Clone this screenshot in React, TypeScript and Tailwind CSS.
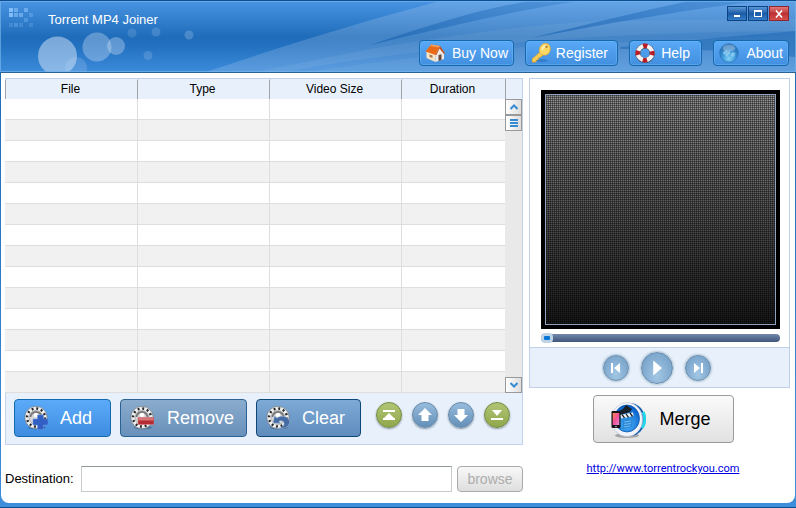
import type { ReactNode } from "react";
import { clsx } from "clsx";

const columns = [
  { name: "File", width: "w-[132px]" },
  { name: "Type", width: "w-[132px]" },
  { name: "Video Size", width: "w-[132px]" },
  { name: "Duration", width: "" },
];

const rows = Array.from({ length: 14 }, (_, i) => i);

function HeaderArt() {
  return (
    <svg
      className="absolute inset-0 h-full w-full"
      viewBox="0 0 796 72"
      preserveAspectRatio="xMaxYMin slice"
      aria-hidden="true"
    >
      <defs>
        <linearGradient id="sky" x1="0" y1="0" x2="0" y2="1">
          <stop offset="0" stopColor="#4894e3" />
          <stop offset="0.5" stopColor="#1f6cba" />
          <stop offset="0.6" stopColor="#216fbf" />
          <stop offset="1" stopColor="#3d8bdb" />
        </linearGradient>
        <linearGradient id="beam" x1="0" y1="0" x2="1" y2="0">
          <stop offset="0" stopColor="#fff" stopOpacity="0.15" />
          <stop offset="1" stopColor="#a9c8ec" stopOpacity="0.26" />
        </linearGradient>
        <linearGradient id="shade" x1="0" y1="0" x2="1" y2="0">
          <stop offset="0" stopColor="#135fae" stopOpacity="0.6" />
          <stop offset="1" stopColor="#2471c0" stopOpacity="0.3" />
        </linearGradient>
      </defs>
      <rect width="796" height="72" fill="url(#sky)" />
      <path d="M203 72C280 46 350 24 440 0H796V72Z" fill="url(#beam)" />
      <path d="M250 72L370 48C430 38 520 24 600 20L796 18V30C600 30 400 48 280 72Z" fill="#fff" fillOpacity="0.06" />
      <path d="M300 72C380 60 450 51 560 44L796 34V72Z" fill="#fff" fillOpacity="0.05" />
      <path d="M370 44C430 24 480 8 530 0H578C510 11 450 25 370 44Z" fill="url(#shade)" />
      <path d="M532 37C600 20 650 8 690 0H760C690 8 610 22 532 37Z" fill="url(#shade)" />
      <path d="M620 46C690 39 750 34 796 30V56C740 50 700 48 620 48Z" fill="#1763b1" fillOpacity="0.45" />
      <g fill="#d5e6f7">
        <circle cx="57.5" cy="55" r="19.5" opacity="0.5" />
        <circle cx="76" cy="67" r="11" opacity="0.18" />
        <circle cx="97" cy="46" r="14.5" opacity="0.35" />
        <circle cx="116" cy="45" r="9" opacity="0.35" />
        <circle cx="132" cy="32" r="4.5" opacity="0.16" />
        <circle cx="156" cy="31" r="4.5" opacity="0.18" />
        <circle cx="189" cy="34" r="4.5" opacity="0.22" />
        <circle cx="148" cy="54.5" r="4.5" opacity="0.18" />
      </g>
      <g fill="#8fc6fb">
        <path d="M9 7h4v4H9zM9 12h4v4H9z" opacity="0.85" />
        <path d="M14 7h4v4h-4zM14 12h4v4h-4zM24 7h4v4h-4zM19 12h4v4h-4z" opacity="0.55" />
        <path d="M29 12h4v4h-4zM24 17h4v4h-4zM14 22h4v4h-4z" opacity="0.3" />
        <path d="M9 22h4v4H9zM19 22h4v4h-4zM29 22h4v4h-4z" opacity="0.2" />
      </g>
    </svg>
  );
}

function HouseIcon() {
  return (
    <svg className="h-5 w-5" viewBox="0 0 20 20" aria-hidden="true">
      <path d="M1.500 9V15l9 4V11L6 4Z" fill="#fbe3c5" />
      <path d="M10.500 11l4-7 4.500 5.500V16L10.500 19Z" fill="#eeeae8" />
      <path d="M6 1.500l9 1.500L10.500 12 .5 8.500Z" fill="#e96b19" />
      <path d="M6 1.500l9 1.500-.8 1.600L5 3Z" fill="#f9a15a" />
      <path d="M15 3l5 7.300-1.200.8L14.500 5.500 11.500 12l-1 0Z" fill="#c8501a" />
      <path d="M13.500 12l3-.8V17l-3 1Z" fill="#69473d" />
      <path d="M4.500 11.500l3 1V15l-3-1Z" fill="#a9764c" />
    </svg>
  );
}

function KeyIcon() {
  return (
    <svg className="h-5 w-5" viewBox="0 0 20 20" aria-hidden="true">
      <ellipse cx="11" cy="17.500" rx="6" ry="1.500" fill="#2368b0" opacity="0.5" />
      <path d="M9 9L1 16l.3 3.300 3.700-.3.300-2 2-.3.300-2 1.900-.4 2.500-2.200Z" fill="#f8cf55" stroke="#dc9420" strokeWidth="0.6" />
      <path d="M10.500 2C13-.5 17 0 18.500 2.500s1 6.500-1.500 8.500-6 1.500-7.800-.7-.8-6.300 1.300-8.300Z" fill="#fbd763" stroke="#e2a02b" strokeWidth="0.6" />
      <path d="M11.500 3.500c1.500-1.700 4-2 5.300-.8C15 3.500 12.500 5.500 11 8c-.8-1.500-.5-3.200.5-4.500Z" fill="#fff0af" />
      <circle cx="15.500" cy="3.800" r="1.200" fill="#b8822e" />
    </svg>
  );
}

function LifebuoyIcon() {
  return (
    <svg className="h-5 w-5" viewBox="0 0 20 20" aria-hidden="true">
      <circle cx="10" cy="10.300" r="7.200" fill="none" stroke="#3c4a63" strokeWidth="5.200" />
      <circle cx="10" cy="10" r="7.200" fill="none" stroke="#f5f3f1" strokeWidth="4.200" />
      <circle cx="10" cy="10" r="7.200" fill="none" stroke="#b81d26" strokeWidth="4.600" strokeDasharray="4.300 7.010" strokeDashoffset="2.150" />
    </svg>
  );
}

function GlobeIcon() {
  return (
    <svg className="h-5 w-5" viewBox="0 0 20 20" aria-hidden="true">
      <defs>
        <radialGradient id="globe" cx="0.5" cy="0.8" r="0.75">
          <stop offset="0" stopColor="#83d3f8" />
          <stop offset="0.5" stopColor="#3994d7" />
          <stop offset="1" stopColor="#2369ae" />
        </radialGradient>
      </defs>
      <circle cx="10" cy="10" r="9.300" fill="url(#globe)" stroke="#2a71b5" strokeWidth="0.7" />
      <path d="M4 9l3-2 2 1.500 2-.5.5 2.500-2.500 1.500-1 2-2-2.500-2-.5ZM12 10.500l2-1.500 2.500 1-1 3-1.500 1-2-1Z" fill="#b5e3fa" opacity="0.55" />
      <ellipse cx="10" cy="5" rx="6.500" ry="3.500" fill="#fff" opacity="0.3" />
    </svg>
  );
}

function ReelIcon({ kind }: { kind: "add" | "remove" | "clear" }) {
  return (
    <svg className="h-6 w-6" viewBox="0 0 24 24" aria-hidden="true">
      <ellipse cx="13" cy="21.500" rx="9" ry="1.800" fill="#20435f" opacity="0.4" />
      <circle cx="12" cy="11.500" r="11.200" fill="#efefef" stroke="#57616c" strokeWidth="0.6" />
      <circle cx="12" cy="11.500" r="9" fill="none" stroke="#22262b" strokeWidth="2.400" strokeDasharray="1.900 2.812" />
      <circle cx="12" cy="11.500" r="7" fill="#d6d6d6" stroke="#a2a2a2" strokeWidth="0.7" />
      <path d="M6.500 11a5.500 5 0 0 1 11 0" fill="none" stroke="#777" strokeWidth="1.800" />
      <circle cx="12" cy="9" r="2.200" fill="#fff" />
      {kind === "add" && (
        <path d="M13.500 9h6v4H24v6h-4.500v4.500h-6V19H9v-6h4.500Z" fill="#315fc4" stroke="#6f98e3" strokeWidth="0.5" />
      )}
      {kind === "remove" && (
        <g>
          <path d="M8 11.500H24v7H8Z" fill="#b52d34" stroke="#de8386" strokeWidth="0.5" />
          <path d="M8.500 12H23.500v2.500H8.500Z" fill="#e59496" opacity="0.7" />
        </g>
      )}
      {kind === "clear" && (
        <path
          d="M7 17l1.500-7 2.500 2c4-3.500 11.500-2 13 4-1 5.500-7 7.500-13 6 4.500 0 7.500-2 7-5-.5-2.300-3.500-2.800-5-1.600l1.500 2Z"
          fill="#456ba5"
          stroke="#b5c9e1"
          strokeWidth="0.5"
        />
      )}
    </svg>
  );
}

function MergeIcon() {
  return (
    <svg className="h-10 w-9" viewBox="0 0 36 40" aria-hidden="true">
      <defs>
        <radialGradient id="disc" cx="0.5" cy="0.7" r="0.65">
          <stop offset="0" stopColor="#4fb6fa" />
          <stop offset="1" stopColor="#0560ca" />
        </radialGradient>
        <linearGradient id="phone" x1="0" y1="0" x2="1" y2="1">
          <stop offset="0" stopColor="#ff8b45" />
          <stop offset="0.5" stopColor="#f24f9b" />
          <stop offset="1" stopColor="#e58ad8" />
        </linearGradient>
      </defs>
      <ellipse cx="17" cy="36.500" rx="12" ry="2.500" fill="#666" opacity="0.5" />
      <ellipse cx="20" cy="20.500" rx="15" ry="16.500" fill="#155fae" />
      <path d="M33 13a16 16 0 0 1-1 16" fill="none" stroke="#25d5e9" strokeWidth="3" />
      <ellipse cx="17" cy="20.500" rx="15.500" ry="17" fill="#f1f4fa" stroke="#bec6d5" strokeWidth="0.7" />
      <ellipse cx="17" cy="19.500" rx="12.500" ry="13.500" fill="url(#disc)" stroke="#0a4fa3" strokeWidth="0.7" />
      <path d="M9 12l4-2 3-4 6 4-2 3-10 3Z" fill="#182029" />
      <path d="M10 16l13-2.500 .5 3.500-12 2.500Z" fill="#f3f5f7" />
      <path d="M12 15.500l2.500 3.500M16 14.800l2.500 3.500M20 14l2.500 3.500" stroke="#20252c" strokeWidth="1.300" />
      <path d="M12 20l11-2-1 10-9 2Z" fill="#2d8bdc" />
      <path d="M14 23l7-1M14 25.500l7-1M14 28l6-1" stroke="#8fcbf5" strokeWidth="0.7" />
      <rect x="1.500" y="12" width="9" height="17" rx="1.200" fill="#131318" />
      <rect x="2.700" y="14" width="6.600" height="12" fill="url(#phone)" />
      <circle cx="6" cy="27.500" r="0.7" fill="#ddd" />
    </svg>
  );
}

function NavButton({ icon, width, children }: { icon: ReactNode; width: string; children: ReactNode }) {
  return (
    <button
      type="button"
      className={clsx(
        "flex h-[26px] items-center justify-between rounded-sm border border-[#1668ad] bg-linear-to-b from-[#58a9f8] to-[#428fdf] px-[5px] text-[14px] text-white inset-ring inset-ring-[#6cb5f7]/50",
        width
      )}
    >
      {icon}
      {children}
    </button>
  );
}

function ReelButton({ kind, width, children }: { kind: "add" | "remove" | "clear"; width: string; children: ReactNode }) {
  return (
    <button
      type="button"
      className={clsx(
        "flex h-[38px] items-center gap-3 rounded-sm border bg-linear-to-b pl-[9px] text-[18px] text-white",
        kind === "add" && "border-[#126aae] from-[#5cabfa] to-[#3d8ce0]",
        kind === "remove" && "border-[#2c6194] from-[#8aaccd] to-[#6990bb]",
        kind === "clear" && "border-[#0d4777] from-[#7daad6] to-[#5f8cbc]",
        width
      )}
    >
      <ReelIcon kind={kind} />
      {children}
    </button>
  );
}

function MoveButton({ label, green, d }: { label: string; green?: boolean; d: string }) {
  return (
    <button
      type="button"
      aria-label={label}
      className={clsx(
        "flex h-[26px] w-[26px] items-center justify-center rounded-full border bg-linear-to-b shadow-[0_1px_2px_#8798a8]",
        green ? "border-[#74893f] from-[#b1c574] to-[#8fa74c]" : "border-[#6688a8] from-[#97bcdd] to-[#648fb7]"
      )}
    >
      <svg className="h-4 w-4" viewBox="0 0 16 16" fill="#fff" aria-hidden="true">
        <path d={d} />
      </svg>
    </button>
  );
}

function PlayerButton({ label, large, d }: { label: string; large?: boolean; d: string }) {
  return (
    <button
      type="button"
      aria-label={label}
      className={clsx(
        "flex items-center justify-center rounded-full border border-[#6b8dad] bg-radial-[at_50%_75%] from-[#a3c7e5] to-[#6e9ac3] shadow-[0_0_2px_1px_#b5c8d9]",
        large ? "h-8 w-8" : "h-[26px] w-[26px]"
      )}
    >
      <svg className={large ? "h-5 w-5" : "h-4 w-4"} viewBox="0 0 16 16" fill="#fff" aria-hidden="true">
        <path d={d} />
      </svg>
    </button>
  );
}

function TitleBar() {
  return (
    <header className="relative h-[73px] border-t border-b border-t-[#0b4f90] border-b-[#2d6292] text-white">
      <HeaderArt />
      <div className="absolute inset-0 border border-[#74b3ed]/70" />
      <div className="relative flex items-start justify-between pt-[5px] pr-[7px] pl-[48px]">
        <h1 className="pt-[6px] text-[13px] leading-4">Torrent MP4 Joiner</h1>
        <div className="flex gap-px">
          <button type="button" aria-label="Minimize" className="flex h-[15px] w-5 items-end justify-center border border-[#0b4385] bg-linear-to-b from-[#5b98d7] via-[#1c5ba6] to-[#347cc6] pb-[3px]">
            <span className="h-[2px] w-[6px] bg-white" />
          </button>
          <button type="button" aria-label="Maximize" className="flex h-[15px] w-5 items-center justify-center border border-[#0b4385] bg-linear-to-b from-[#5b98d7] via-[#1c5ba6] to-[#347cc6]">
            <span className="h-[7px] w-2 border border-t-2 border-white" />
          </button>
          <button type="button" aria-label="Close" className="flex h-[15px] w-5 items-center justify-center border border-[#8c2732] bg-linear-to-b from-[#e17979] via-[#bd3034] to-[#d3504b]">
            <svg className="h-2 w-2" viewBox="0 0 8 8" stroke="#fff" strokeWidth="1.6" aria-hidden="true">
              <path d="M1 .5l6 7M7 .5l-6 7" />
            </svg>
          </button>
        </div>
      </div>
      <nav className="relative flex justify-end gap-[11px] pt-3 pr-[7px]">
        <NavButton icon={<HouseIcon />} width="w-[95px]">Buy Now</NavButton>
        <NavButton icon={<KeyIcon />} width="w-[93px]">
          <span className="pr-1">Register</span>
        </NavButton>
        <NavButton icon={<LifebuoyIcon />} width="w-[73px]">
          <span className="pr-[6px]">Help</span>
        </NavButton>
        <NavButton icon={<GlobeIcon />} width="w-[76px]">About</NavButton>
      </nav>
    </header>
  );
}

function FileTable() {
  return (
    <div className="flex border-t border-r border-[#bfd0e8]">
      <table className="flex-1 table-fixed border-separate border-spacing-0 text-[12px]">
        <thead>
          <tr className="h-5 bg-[#e8f1fb]">
            {columns.map((column) => (
              <th key={column.name} scope="col" className={clsx("rounded-tl-xs border-l border-[#a0a4a8] p-0 pr-[2px] font-normal", column.width)}>
                {column.name}
              </th>
            ))}
          </tr>
        </thead>
        <tbody>
          {rows.map((row) => (
            <tr key={row} className={clsx("h-[21px]", row % 2 ? "bg-[#f1f1f1]" : "bg-white")}>
              {columns.map((column) => (
                <td key={column.name} className="border-b border-l border-[#dedede] p-0 first:border-l-0" />
              ))}
            </tr>
          ))}
        </tbody>
      </table>
      <div className="flex w-[17px] flex-col bg-[#e9e9e9]">
        <div className="h-5 border-l border-[#a0a4a8] bg-[#e8f1fb]" />
        <button type="button" aria-label="Scroll up" className="flex h-4 items-center justify-center border border-[#999] bg-linear-to-r from-white to-[#ddd]">
          <svg className="h-2 w-2" viewBox="0 0 8 8" fill="none" stroke="#378bd2" strokeWidth="2" aria-hidden="true">
            <path d="M.5 6L4 2.500 7.500 6" />
          </svg>
        </button>
        <div className="flex h-4 flex-col items-center justify-center gap-px border border-[#999] bg-linear-to-r from-white to-[#ddd]">
          <span className="h-[2px] w-2 bg-[#378bd2]" />
          <span className="h-[2px] w-2 bg-[#378bd2]" />
          <span className="h-[2px] w-2 bg-[#378bd2]" />
        </div>
        <button type="button" aria-label="Scroll down" className="mt-auto flex h-4 items-center justify-center border border-[#999] bg-linear-to-r from-white to-[#ddd]">
          <svg className="h-2 w-2" viewBox="0 0 8 8" fill="none" stroke="#378bd2" strokeWidth="2" aria-hidden="true">
            <path d="M.5 2L4 5.500 7.500 2" />
          </svg>
        </button>
      </div>
    </div>
  );
}

function Toolbar() {
  return (
    <div className="flex h-[52px] justify-between border border-t-0 border-[#c3d4ea] bg-[#e8f1fb] pt-[6px] pr-3 pl-2">
      <div className="flex gap-[9px]">
        <ReelButton kind="add" width="w-[97px]">Add</ReelButton>
        <ReelButton kind="remove" width="w-[127px]">
          <span className="pl-px">Remove</span>
        </ReelButton>
        <ReelButton kind="clear" width="w-[105px]">Clear</ReelButton>
      </div>
      <div className="flex gap-[10px] pt-[3px]">
        <MoveButton label="Move to top" green d="M2 3h12v2H2zM8 6l5 5H3zM2 11h12v2H2z" />
        <MoveButton label="Move up" d="M8 1l7 7h-3.500v6h-7V8H1z" />
        <MoveButton label="Move down" d="M8 15L1 8h3.500V2h7v6H15z" />
        <MoveButton label="Move to bottom" green d="M3 3h10L8 9zM2 11h12v2H2z" />
      </div>
    </div>
  );
}

function Preview() {
  return (
    <section aria-label="Preview" className="border border-[#bfd0e8]">
      <div className="pt-[11px] pr-[9px] pl-[11px]">
        <div className="aspect-square w-full bg-black p-1">
          <div className="h-full w-full border border-[#8fa3c0] bg-[linear-gradient(90deg,#00000066_1px,#0000_1px),linear-gradient(#00000066_1px,#0000_1px),linear-gradient(#989898,#1a1a1a)] bg-size-[2px_2px,2px_2px,100%_100%]" />
        </div>
        <div className="flex h-[18px] items-center">
          <input
            type="range"
            aria-label="Position"
            defaultValue={0}
            className="h-2 w-full appearance-none rounded-sm bg-linear-to-b from-[#7388ad] to-[#405579] [&::-webkit-slider-thumb]:h-[10px] [&::-webkit-slider-thumb]:w-3 [&::-webkit-slider-thumb]:appearance-none [&::-webkit-slider-thumb]:rounded-sm [&::-webkit-slider-thumb]:border-3 [&::-webkit-slider-thumb]:border-[#bfd3e7] [&::-webkit-slider-thumb]:bg-[#0876d8]"
          />
        </div>
      </div>
      <div className="flex h-10 items-center justify-center gap-3 border-t border-[#bfd0e8] bg-[#e8f1fb] pr-[6px]">
        <PlayerButton label="Previous" d="M3 3h2v10H3zM12 3v10L6 8z" />
        <PlayerButton label="Play" large d="M5 2l7 6-7 6z" />
        <PlayerButton label="Next" d="M4 3l6 5-6 5zM11 3h2v10h-2z" />
      </div>
    </section>
  );
}

export default function App() {
  return (
    <div className="bg-linear-to-b from-[#1b67ae] to-[#3f8edb] font-['Liberation_Sans',sans-serif] text-black">
      <TitleBar />
      <div className="mx-px rounded-b-lg bg-white">
        <main className="flex gap-[6px] pt-[5px] pr-[5px] pb-[11px] pl-1">
          <div className="min-w-0 flex-1">
            <FileTable />
            <Toolbar />
            <div className="mt-[21px] flex items-center gap-[5px]">
              <label htmlFor="destination" className="w-[71px] text-[13px]">Destination:</label>
              <input id="destination" type="text" className="h-[26px] min-w-0 flex-1 border border-[#c6ccce] border-t-[#8f9799] bg-white px-1 text-[13px]" />
              <button type="button" disabled className="h-[26px] w-[66px] rounded-sm border border-[#aaa] bg-linear-to-b from-[#f8f8f8] to-[#dedede] text-[14px] leading-4 text-[#adadad]">
                browse
              </button>
            </div>
          </div>
          <aside className="w-[261px]">
            <Preview />
            <div className="flex flex-col items-center pt-[7px] pl-[7px]">
              <button type="button" className="flex h-12 w-[141px] items-center gap-[14px] rounded-sm border border-[#9b9b9b] bg-linear-to-b from-[#fafafa] via-[#eee] via-50% to-[#e1e1e1] pl-4 text-[18px]">
                <MergeIcon />
                Merge
              </button>
              <a href="http://www.torrentrockyou.com" className="mt-[18px] font-['Roboto',sans-serif] text-[11px] leading-4 text-[#0000e0] underline">
                http://www.torrentrockyou.com
              </a>
            </div>
          </aside>
        </main>
      </div>
      <div className="h-[5px] border-b border-[#0b4f90]" />
    </div>
  );
}
